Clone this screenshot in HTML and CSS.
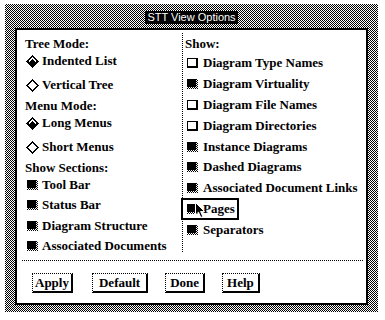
FILE: index.html
```html
<!DOCTYPE html>
<html lang="en">
<head>
    <meta charset="UTF-8">
    <meta name="viewport" content="width=device-width, initial-scale=1.0">
    <title>STT View Options</title>
    <link rel="stylesheet" href="styles.css">
</head>
<body>
    <div class="window">
        <div class="titlebar">
            <span class="title">STT View Options</span>
        </div>
        <div class="panel">
            <div class="columns">
                <!-- Left column: modes and sections -->
                <div class="col col-left">
                    <div class="label first">Tree Mode:</div>
                    <div class="opt radio-row">
                        <span class="icon"><svg width="13" height="13" viewBox="0 0 13 13" shape-rendering="crispEdges"><path d="M6.5 0 L13 6.5 L6.5 13 L0 6.5Z" fill="#000"/><path d="M3 6.5 L6.5 3 L10 6.5" fill="none" stroke="#fff" stroke-width="1"/></svg></span>
                        Indented List
                    </div>
                    <div class="opt radio-row">
                        <span class="icon"><svg width="13" height="13" viewBox="0 0 13 13" shape-rendering="crispEdges"><path d="M6.5 1 L12 6.5 L6.5 12 L1 6.5Z" fill="#fff" stroke="#000" stroke-width="1.8"/></svg></span>
                        Vertical Tree
                    </div>
                    <div class="label">Menu Mode:</div>
                    <div class="opt radio-row">
                        <span class="icon"><svg width="13" height="13" viewBox="0 0 13 13" shape-rendering="crispEdges"><path d="M6.5 0 L13 6.5 L6.5 13 L0 6.5Z" fill="#000"/><path d="M3 6.5 L6.5 3 L10 6.5" fill="none" stroke="#fff" stroke-width="1"/></svg></span>
                        Long Menus
                    </div>
                    <div class="opt radio-row">
                        <span class="icon"><svg width="13" height="13" viewBox="0 0 13 13" shape-rendering="crispEdges"><path d="M6.5 1 L12 6.5 L6.5 12 L1 6.5Z" fill="#fff" stroke="#000" stroke-width="1.8"/></svg></span>
                        Short Menus
                    </div>
                    <div class="label">Show Sections:</div>
                    <div class="opt check-row"><span class="icon"><span class="check on"></span></span>Tool Bar</div>
                    <div class="opt check-row"><span class="icon"><span class="check on"></span></span>Status Bar</div>
                    <div class="opt check-row"><span class="icon"><span class="check on"></span></span>Diagram Structure</div>
                    <div class="opt check-row"><span class="icon"><span class="check on"></span></span>Associated Documents</div>
                </div>

                <div class="vsep"></div>

                <!-- Right column: show flags -->
                <div class="col col-right">
                    <div class="label first">Show:</div>
                    <div class="opt"><span class="icon"><span class="check"></span></span>Diagram Type Names</div>
                    <div class="opt"><span class="icon"><span class="check on"></span></span>Diagram Virtuality</div>
                    <div class="opt"><span class="icon"><span class="check"></span></span>Diagram File Names</div>
                    <div class="opt"><span class="icon"><span class="check"></span></span>Diagram Directories</div>
                    <div class="opt"><span class="icon"><span class="check on"></span></span>Instance Diagrams</div>
                    <div class="opt"><span class="icon"><span class="check on"></span></span>Dashed Diagrams</div>
                    <div class="opt"><span class="icon"><span class="check on"></span></span>Associated Document Links</div>
                    <div class="opt focus">
                        <span class="icon"><span class="check on"></span></span>Pages
                        <svg class="cursor" width="11" height="17" viewBox="0 0 11 17"><path d="M0.5 0.5 L0.5 13 L3.5 10.2 L5.8 15.5 L7.8 14.6 L5.6 9.5 L9.5 9.5 Z" fill="#000" stroke="#fff" stroke-width="1"/></svg>
                    </div>
                    <div class="opt"><span class="icon"><span class="check on"></span></span>Separators</div>
                </div>
            </div>

            <div class="hsep"></div>

            <div class="buttons">
                <button class="btn btn-apply">Apply</button>
                <button class="btn btn-default">Default</button>
                <button class="btn">Done</button>
                <button class="btn">Help</button>
            </div>
        </div>
    </div>
</body>
</html>
```

FILE: styles.css
```css
body {
    margin: 0;
    background: #fff;
    font-family: "Liberation Serif", "Times New Roman", serif;
    font-weight: bold;
    font-size: 13px;
    color: #000;
}
.window {
    margin: 4px 0 0 5px;
    width: 373px;
    height: 308px;
    box-sizing: border-box;
    padding: 0 10px 7px 10px;
    background-image: repeating-conic-gradient(#000 0% 25%, #fff 0% 50%);
    background-size: 2px 2px;
    display: flex;
    flex-direction: column;
}
.titlebar {
    height: 24px;
    display: flex;
    align-items: center;
    justify-content: center;
    padding-top: 2px;
    box-sizing: border-box;
}
.title {
    background: #000;
    color: #fff;
    font-family: "Liberation Sans", Arial, sans-serif;
    font-weight: normal;
    font-size: 11px;
    line-height: 13px;
    padding: 0 2px;
}
.panel {
    flex: 1;
    background: #fff;
    border: 2px solid #000;
    display: flex;
    flex-direction: column;
}
.columns {
    display: flex;
    height: 220px;
    padding-top: 3px;
}
.col {
    display: flex;
    flex-direction: column;
}
.col-left {
    width: 157px;
    padding-left: 8px;
    padding-top: 3px;
}
.col-right {
    flex: 1;
    padding-left: 2px;
    padding-top: 3px;
}
.vsep {
    width: 1px;
    background: repeating-linear-gradient(to bottom, #000 0 1px, transparent 1px 2px);
}
.label {
    height: 16px;
    line-height: 16px;
}
.label.first {
    height: 17px;
}
.opt {
    display: flex;
    align-items: center;
    white-space: nowrap;
}
.col-left .opt {
    height: 16px;
}
.radio-row + .radio-row {
    margin-top: 8px;
}
.opt + .label {
    margin-top: 5px;
}
.label + .opt {
    margin-top: 1px;
}
.check-row + .check-row {
    margin-top: 4.3px;
}
.col-right .opt {
    height: 20.8px;
}
.col-right .label + .opt {
    margin-top: 0;
}
.icon {
    width: 14px;
    display: flex;
    justify-content: center;
    align-items: center;
    margin-right: 3px;
}
.col-right .icon {
    margin-right: 4px;
}
.icon svg {
    display: block;
}
.check {
    width: 8px;
    height: 7px;
    border-top: 1px solid #000;
    border-left: 1px solid #000;
    border-right: 2px solid #000;
    border-bottom: 2px solid #000;
    background: #fff;
}
.check.on {
    width: 11px;
    height: 10px;
    border: none;
    background-image: repeating-conic-gradient(#000 0% 25%, #fff 0% 50%);
    background-size: 2px 2px;
    position: relative;
}
.check.on::after {
    content: "";
    position: absolute;
    left: 0;
    top: 0;
    width: 9px;
    height: 8px;
    background: #000;
}
.focus {
    position: relative;
    width: max-content;
    margin-left: -3px;
    padding: 0 3px;
    outline: 2px solid #000;
    outline-offset: -1px;
}
.cursor {
    position: absolute;
    left: 13px;
    top: 3px;
}
.hsep {
    height: 1px;
    margin: 7px 3px 0 5px;
    background: repeating-linear-gradient(to right, #000 0 1px, transparent 1px 2px);
}
.buttons {
    display: flex;
    gap: 17px;
    padding: 12px 0 0 15px;
}
.btn {
    font-family: "Liberation Serif", "Times New Roman", serif;
    font-weight: bold;
    font-size: 13px;
    height: 20px;
    padding: 0 4px;
    background: #fff;
    color: #000;
    border-top: 1px dotted #000;
    border-left: 1px dotted #000;
    border-right: 2px solid #000;
    border-bottom: 2px solid #000;
    border-radius: 0;
    line-height: 16px;
}
.btn-apply {
    padding: 0 2px;
    margin-right: 2px;
}
.btn-default {
    padding: 0 6px;
}
```
